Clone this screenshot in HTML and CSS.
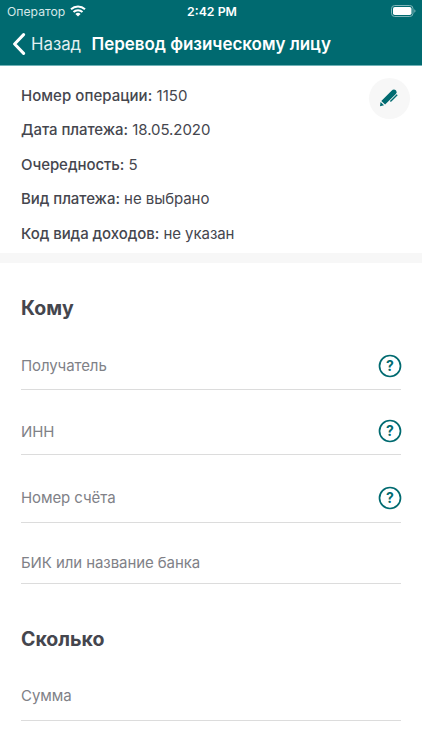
FILE: index.html
```html
<!DOCTYPE html>
<html lang="ru">
<head>
<meta charset="utf-8">
<title>Перевод физическому лицу</title>
<link rel="stylesheet" href="styles.css">
</head>
<body>
<header class="top">
  <div class="status">
    <div class="carrier"><span>Оператор</span>
      <svg class="wifi" width="16" height="12" viewBox="0 0 16 12"><g fill="none" stroke="#fff" stroke-width="2"><path d="M1 4.2a10.2 10.2 0 0 1 14 0"/><path d="M3.5 7a6.6 6.6 0 0 1 9 0"/></g><path d="M5.4 8.9a4 4 0 0 1 5.2 0L8 11.6z" fill="#fff"/></svg>
    </div>
    <div class="clock">2:42 PM</div>
    <svg class="battery" width="26" height="12" viewBox="0 0 26 12"><rect x=".5" y=".5" width="21.5" height="11" rx="3.2" fill="none" stroke="#7fb5b9"/><rect x="2" y="2" width="18.5" height="8" rx="1.8" fill="#fff"/><path d="M23.3 4.2c1.6.6 1.6 3 0 3.6z" fill="#7fb5b9"/></svg>
  </div>
  <nav class="nav">
    <svg class="chevron" width="14" height="22" viewBox="0 0 14 22"><path d="M11.6 1.6 2.6 11l9 9.4" fill="none" stroke="#fff" stroke-width="3" stroke-linecap="round" stroke-linejoin="round"/></svg>
    <span class="back">Назад</span>
    <h1>Перевод физическому лицу</h1>
  </nav>
</header>
<section class="summary">
  <dl>
    <div><dt>Номер операции:</dt> <dd>1150</dd></div>
    <div><dt>Дата платежа:</dt> <dd>18.05.2020</dd></div>
    <div><dt>Очередность:</dt> <dd>5</dd></div>
    <div><dt>Вид платежа:</dt> <dd>не выбрано</dd></div>
    <div><dt>Код вида доходов:</dt> <dd>не указан</dd></div>
  </dl>
  <div class="edit"><svg width="20" height="20" viewBox="0 0 20 20"><path d="M2.3 12.9 12.3 3q2.4-2.4 4.2-.9l.7.6q1.4 1.6-.6 3.6L6.1 16.5z" fill="#006a70"/><path d="M1.6 14 5 17.2 1 18.2z" fill="#006a70"/><path d="M18.2 6.7 11.4 13.5" fill="none" stroke="#006a70" stroke-width="1.4"/></svg></div>
</section>
<main>
  <h2>Кому</h2>
  <div class="field recipient"><span>Получатель</span><i class="help"><svg width="24" height="24" viewBox="0 0 24 24"><circle cx="12" cy="12" r="10.5"/></svg><b>?</b></i></div>
  <div class="field inn"><span>ИНН</span><i class="help"><svg width="24" height="24" viewBox="0 0 24 24"><circle cx="12" cy="12" r="10.5"/></svg><b>?</b></i></div>
  <div class="field account"><span>Номер счёта</span><i class="help"><svg width="24" height="24" viewBox="0 0 24 24"><circle cx="12" cy="12" r="10.5"/></svg><b>?</b></i></div>
  <div class="field bank"><span>БИК или название банка</span></div>
  <h2 class="amount-title">Сколько</h2>
  <div class="field amount"><span>Сумма</span></div>
</main>
</body>
</html>
```
FILE: styles.css
```css
* { box-sizing: border-box; }
body { margin: 0; width: 422px; height: 750px; overflow: hidden; background: #fff; color: #45464e; font-family: Inter, "Noto Sans", sans-serif; }
.top { height: 66px; background: #006a70; color: #fff; border-bottom: 1px solid #70b2b7; }
.status { height: 22px; display: grid; grid-template-columns: 1fr auto 1fr; align-items: center; padding: 0 5px 0 7px; }
.carrier { display: flex; align-items: center; gap: 5px; font-size: 12.2px; color: #d5e8e9; }
.clock { font-size: 12.3px; font-weight: 600; }
.battery { justify-self: end; margin-top: -1px; }
.nav { height: 43px; display: flex; align-items: center; padding-left: 12px; }
.back { margin-left: 5px; width: 60.5px; font-size: 16.8px; color: #e3f0f1; white-space: nowrap; }
h1 { margin: 0; font-size: 17px; font-weight: 600; letter-spacing: -.03px; white-space: nowrap; }
.summary { height: 197px; display: flex; justify-content: space-between; padding: 12px 12px 0 21px; border-bottom: 10px solid #f7f7f7; }
dl { margin: -.5px 0 0; }
dl div { height: 34.6px; line-height: 35px; font-size: 15px; letter-spacing: -.06px; white-space: nowrap; }
dl div:first-child { letter-spacing: .04px; }
dt, dd { display: inline; margin: 0; }
dt { font-weight: 500; }
.edit { width: 41px; height: 41px; border-radius: 50%; background: #f7f7f7; display: grid; place-items: center; }
.edit svg { margin: -2px 0 0 -1px; }
main { padding: 30px 21px 0; }
h2 { margin: 0; height: 30px; line-height: 30px; font-size: 19.5px; font-weight: 700; }
.field { display: flex; justify-content: space-between; align-items: center; border-bottom: 1px solid #dcdcdc; font-size: 15px; letter-spacing: -.08px; color: #808187; }
.recipient { height: 67px; padding-top: 19px; }
.inn { height: 65px; padding-top: 18px; }
.account { height: 68px; padding-top: 18px; }
.bank { height: 61px; padding-top: 18px; }
.amount-title { margin-top: 40px; }
.amount { height: 67px; padding-top: 16px; }
.help { width: 24px; height: 24px; margin-right: -1px; display: grid; place-items: center; color: #006a70; font-style: normal; }
.help > * { grid-area: 1 / 1; }
.help circle { fill: none; stroke: #006a70; stroke-width: 1.7; }
.help b { font-size: 14px; font-weight: 700; line-height: 1; }
```
